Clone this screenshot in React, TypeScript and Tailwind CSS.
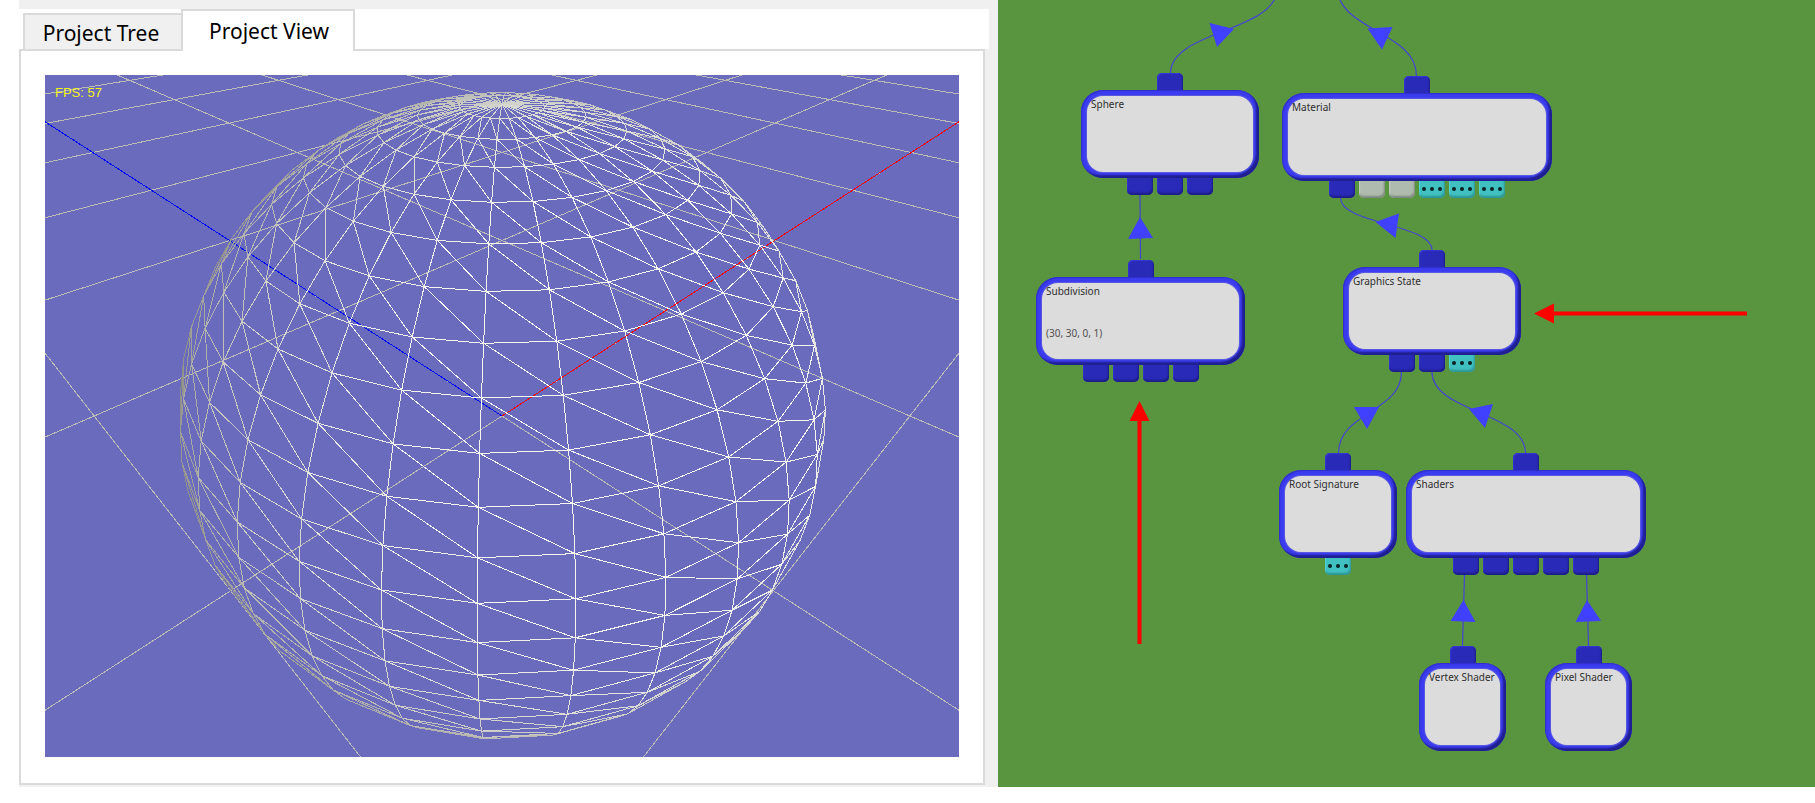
import React from "react";

/* ---------- 3D preview ---------- */

type Vec3 = { x: number; y: number; z: number };

const FOCAL = 628;
const DISTANCE = 2.184;
const SIN_PITCH = 0.644;
const COS_PITCH = 0.765;

/* World (right, up, forward) to camera space, relative to the orbit centre. */
const toCamera = (right: number, up: number, forward: number): Vec3 => ({
  x: right,
  y: up * COS_PITCH + forward * SIN_PITCH,
  z: -up * SIN_PITCH + forward * COS_PITCH,
});

const project = (p: Vec3): [number, number] => {
  const k = FOCAL / (DISTANCE + p.z);
  return [p.x * k, -p.y * k];
};

const fmt = (n: number) => n.toFixed(1);

const GRID_UNIT = 1.003;

function gridSegment(x0: number, z0: number, x1: number, z1: number): string {
  const steps: [number, number][] = [
    [x0, z0],
    [x1, z1],
  ];
  const near = -2.4;
  const pts = steps.map(([x, z], i) => {
    let px = x;
    let pz = z;
    if ((px + pz) / Math.SQRT2 < near) {
      const [ox, oz] = steps[1 - i];
      const t = (near * Math.SQRT2 - (x + z)) / (ox + oz - (x + z));
      px = x + (ox - x) * t;
      pz = z + (oz - z) * t;
    }
    const k = GRID_UNIT / Math.SQRT2;
    return project(toCamera((px - pz) * k, 0, (px + pz) * k));
  });
  return `M${fmt(pts[0][0])} ${fmt(pts[0][1])}L${fmt(pts[1][0])} ${fmt(pts[1][1])}`;
}

const GRID_SIZE = 10;
const gridPath = Array.from({ length: GRID_SIZE + 3 }, (_, i) => i - 2)
  .map(
    (n) =>
      gridSegment(n, -Math.min(2, n + 2), n, GRID_SIZE) +
      gridSegment(-Math.min(2, n + 2), n, GRID_SIZE, n),
  )
  .join("");
const xAxis = gridSegment(0, 0, GRID_SIZE, 0);
const zAxis = gridSegment(0, 0, 0, GRID_SIZE);

const SLICES = 30;
const STACKS = 30;

function vertex(stack: number, slice: number): Vec3 {
  const lat = Math.PI / 2 - (Math.PI * stack) / STACKS;
  const lon = (Math.PI * 2 * slice) / SLICES - Math.PI / 60;
  return toCamera(
    Math.cos(lat) * Math.sin(lon),
    Math.sin(lat),
    -Math.cos(lat) * Math.cos(lon),
  );
}

function buildSphere(): { level: number; d: string }[] {
  const buckets = new Map<number, string>();
  const seen = new Set<string>();
  const addTriangle = (a: Vec3, b: Vec3, c: Vec3) => {
    const p = [project(a), project(b), project(c)];
    const area =
      (p[1][0] - p[0][0]) * (p[2][1] - p[0][1]) -
      (p[2][0] - p[0][0]) * (p[1][1] - p[0][1]);
    if (area < 0.01) return;
    const v = [a, b, c];
    for (let i = 0; i < 3; i++) {
      const j = (i + 1) % 3;
      const ends = [p[i].map(fmt).join(" "), p[j].map(fmt).join(" ")].sort();
      const key = ends.join("|");
      if (seen.has(key)) continue;
      seen.add(key);
      const nx = (v[i].x + v[j].x) / 2;
      const nz = -(v[i].z + v[j].z) / 2;
      const light = 0.5 + 0.19 * nx + 0.5 * nz;
      const level = Math.min(246, Math.round((light * 255) / 6) * 6);
      buckets.set(level, (buckets.get(level) ?? "") + `M${ends[0]}L${ends[1]}`);
    }
  };
  for (let i = 0; i < STACKS; i++) {
    for (let j = 0; j < SLICES; j++) {
      const tl = vertex(i, j);
      const tr = vertex(i, j + 1);
      const bl = vertex(i + 1, j);
      const br = vertex(i + 1, j + 1);
      addTriangle(tl, tr, br);
      addTriangle(tl, br, bl);
    }
  }
  return [...buckets.entries()]
    .sort((a, b) => a[0] - b[0])
    .map(([level, d]) => ({ level, d }));
}

const sphere = buildSphere();

function Viewport() {
  return (
    <div className="relative min-h-0 flex-1 overflow-hidden bg-[#6b6bbd]">
      <svg
        className="block h-full w-full"
        viewBox="-457 -341 914 682"
        preserveAspectRatio="xMidYMid slice"
        shapeRendering="crispEdges"
        fill="none"
        strokeWidth="1"
        role="img"
        aria-label="Wireframe sphere"
      >
        <path d={gridPath} stroke="#bcbcb6" />
        <path d={xAxis} stroke="#ff0000" />
        <path d={zAxis} stroke="#0000ff" />
        {sphere.map(({ level, d }) => (
          <path key={level} d={d} stroke={`rgb(${level},${level},${level - 5})`} />
        ))}
      </svg>
      <span className="absolute top-2.5 left-2.5 font-['Liberation_Sans',sans-serif] text-[13px] leading-4 text-[#f5f514]">
        FPS: 57
      </span>
    </div>
  );
}

function PreviewPanel() {
  return (
    <section className="flex min-w-0 flex-col bg-white pl-[19px]">
      <div className="h-[9px] shrink-0 bg-[#f0f0f0]" />
      <div className="flex min-h-0 flex-1 flex-col bg-[#f0f0f0] pb-0.5">
        <div
          role="tablist"
          className="mr-[9px] flex h-10 shrink-0 items-end bg-white pl-1 font-['Noto_Sans',sans-serif] text-[21px] leading-7 text-black"
        >
          <button
            role="tab"
            aria-selected="false"
            className="h-9 w-[158px] border-2 border-r-0 border-b-0 border-[#dadada] bg-[#f0f0f0] pt-0.5 pr-1 whitespace-nowrap"
          >
            Project Tree
          </button>
          <button
            role="tab"
            aria-selected="true"
            className="relative z-10 -mb-0.5 h-[42px] w-[174px] border-2 border-b-0 border-[#dadada] bg-white pl-0.5 whitespace-nowrap"
          >
            Project View
          </button>
        </div>
        <div
          role="tabpanel"
          className="mr-[13px] flex min-h-0 flex-1 flex-col border-2 border-[#dadada] bg-white px-6 pt-6 pb-[26px]"
        >
          <Viewport />
        </div>
      </div>
    </section>
  );
}

/* ---------- Node graph ---------- */

type PortKind = "blue" | "gray" | "teal";

const portStyles: Record<PortKind, string> = {
  blue: "bg-[#2a2ab9] shadow-[inset_-1px_-2px_2px_#1d1d85,inset_1px_1px_1px_#3636d6]",
  gray: "bg-[#aebbae] shadow-[inset_-1px_-2px_2px_#7f877f,inset_1px_1px_1px_#c8d2c8]",
  teal: "bg-[#40c0c0] shadow-[inset_-1px_-2px_2px_#2f9494,inset_1px_1px_1px_#55d8d8]",
};

function Port({ kind, top = false }: { kind: PortKind; top?: boolean }) {
  return (
    <span
      className={`flex h-[22px] w-[26px] justify-center gap-1 ${
        top ? "rounded-t-[5px]" : "items-end rounded-b-[5px] pb-[7px]"
      } ${portStyles[kind]}`}
    >
      {kind === "teal" &&
        [0, 1, 2].map((i) => <i key={i} className="size-1 rounded-full bg-[#0b2222]" />)}
    </span>
  );
}

type NodeProps = {
  title: string;
  detail?: string;
  place: string;
  inputs?: PortKind[];
};

function GraphNode({ title, detail, place, inputs = [] }: NodeProps) {
  return (
    <div className={`absolute h-[88px] ${place}`}>
      <div className="absolute inset-x-0 -top-[17px] flex justify-center">
        <Port kind="blue" top />
      </div>
      <div className="absolute inset-x-0 -bottom-[17px] flex justify-center gap-1">
        {inputs.map((kind, i) => (
          <Port key={i} kind={kind} />
        ))}
      </div>
      <div className="relative h-full rounded-[22px] bg-[#3b3bf0] p-1.5 shadow-[inset_-3px_-3px_2px_#1f1f90,inset_1px_1px_1px_#3030c8]">
        <div className="h-full rounded-[16px] bg-[#dcdcdc] shadow-[0_0_1px_1px_#5c5ce0]" />
        <div className="absolute top-[7px] left-2.5 font-['Noto_Sans',sans-serif] text-[10px] leading-[14px] whitespace-nowrap text-[#2e2e2e]">
          <p>{title}</p>
          {detail && <p className="pt-7 text-[#505050]">{detail}</p>}
        </div>
      </div>
    </div>
  );
}

const nodes: NodeProps[] = [
  { title: "Sphere", place: "left-[83px] top-[90px] w-[178px]", inputs: ["blue", "blue", "blue"] },
  {
    title: "Material",
    place: "left-[284px] top-[93px] w-[270px]",
    inputs: ["blue", "gray", "gray", "teal", "teal", "teal"],
  },
  {
    title: "Subdivision",
    detail: "(30, 30, 0, 1)",
    place: "left-[38px] top-[277px] w-[209px]",
    inputs: ["blue", "blue", "blue", "blue"],
  },
  { title: "Graphics State", place: "left-[345px] top-[267px] w-[178px]", inputs: ["blue", "blue", "teal"] },
  { title: "Root Signature", place: "left-[281px] top-[470px] w-[118px]", inputs: ["teal"] },
  {
    title: "Shaders",
    place: "left-[408px] top-[470px] w-[240px]",
    inputs: ["blue", "blue", "blue", "blue", "blue"],
  },
  { title: "Vertex Shader", place: "left-[421px] top-[663px] w-[87px]" },
  { title: "Pixel Shader", place: "left-[547px] top-[663px] w-[87px]" },
];

const links = [
  "M172.5 73C172.5 31 279.5 31 279.5 -12",
  "M418.5 76C418.5 31 339 31 339 -14",
  "M142.5 259L142 195",
  "M434 250C434 224 342.5 224 342.5 198",
  "M340.5 453C340.5 412 403.5 412 403.5 372",
  "M527.5 453C527.5 412 434 412 434 372",
  "M464.5 646L466.5 575",
  "M590.5 646L588.5 575",
];

const arrows = [
  "211.5,23 236,29 219,47",
  "369.5,28.5 394.5,27 384,49.5",
  "142,217 130,239 155,238",
  "377.5,222 401,213.5 397.5,238",
  "356,407 381,407 369,429",
  "471,409 495,404 487,428",
  "465.5,600 452.5,621 477.5,622",
  "589,600 577.5,622 603,621",
];

function GraphCanvas() {
  return (
    <section className="relative min-w-0 overflow-hidden bg-[#59953f]">
      <svg className="absolute inset-0 h-full w-full" aria-hidden="true">
        {links.map((d) => (
          <path key={d} d={d} fill="none" stroke="#4545d0" strokeWidth="1.2" />
        ))}
        {arrows.map((points) => (
          <polygon key={points} points={points} fill="#4040ff" />
        ))}
        <g fill="#ff0000">
          <path d="M536 313.5L556 303.5V311.5H749V315.5H556V323.5Z" />
          <path d="M141.5 401L131.5 421H139.5V644H143.5V421H151.5Z" />
        </g>
      </svg>
      {nodes.map((node) => (
        <GraphNode key={node.title} {...node} />
      ))}
    </section>
  );
}

export default function App() {
  return (
    <main className="h-screen bg-white pb-4">
      <div className="grid h-full grid-cols-[998fr_817fr]">
        <PreviewPanel />
        <GraphCanvas />
      </div>
    </main>
  );
}
